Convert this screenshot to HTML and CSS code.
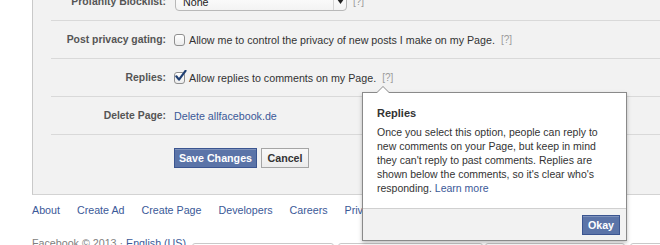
FILE: index.html
```html
<!DOCTYPE html>
<html>
<head>
<meta charset="utf-8">
<link rel="stylesheet" href="styles.css">
</head>
<body>
<div class="page">
  <div class="panel">
    <div class="row">
      <div class="label">Profanity Blocklist:</div>
      <div class="value">
        <div class="select"><span class="select-text">None</span><span class="select-arrow"><svg width="7" height="5" viewBox="0 0 7 5"><path d="M0 0h7L3.5 5z" fill="#222"/></svg></span></div>
        <span class="help">[?]</span>
      </div>
    </div>
    <div class="row">
      <div class="label">Post privacy gating:</div>
      <div class="value">
        <span class="checkbox"></span>
        <span class="text">Allow me to control the privacy of new posts I make on my Page.</span>
        <span class="help">[?]</span>
      </div>
    </div>
    <div class="row">
      <div class="label">Replies:</div>
      <div class="value">
        <span class="checkbox checked"><svg width="13" height="13" viewBox="0 0 13 13"><path d="M2.3 6.3 L5 9.6 L11.5 0.8" fill="none" stroke="#1f3f73" stroke-width="2.2" stroke-linecap="round" stroke-linejoin="round"/></svg></span>
        <span class="text">Allow replies to comments on my Page.</span>
        <span class="help">[?]</span>
      </div>
    </div>
    <div class="row">
      <div class="label">Delete Page:</div>
      <div class="value">
        <a class="link">Delete allfacebook.de</a>
      </div>
    </div>
    <div class="actions">
      <button class="btn btn-primary btn-save">Save Changes</button>
      <button class="btn btn-default">Cancel</button>
    </div>
  </div>
  <div class="footer-links">
    <a class="link">About</a>
    <a class="link">Create Ad</a>
    <a class="link">Create Page</a>
    <a class="link">Developers</a>
    <a class="link">Careers</a>
    <a class="link">Privacy</a>
    <a class="link">Cookies</a>
    <a class="link">Terms</a>
  </div>
  <div class="copyright">Facebook © 2013 · <a class="link">English (US)</a></div>
</div>

<div class="dock">
  <div class="dock-tab tab1"></div>
  <div class="dock-tab tab2"></div>
  <div class="dock-tab tab3"></div>
  <div class="dock-tab tab4"></div>
</div>

<div class="popup">
  <div class="popup-arrow"></div>
  <div class="popup-body">
    <div class="popup-title">Replies</div>
    <div class="popup-text">Once you select this option, people can reply to new comments on your Page, but keep in mind they can't reply to past comments. Replies are shown below the comments, so it's clear who's responding. <a class="link">Learn more</a></div>
  </div>
  <div class="popup-footer">
    <button class="btn btn-primary btn-okay">Okay</button>
  </div>
</div>
</body>
</html>
```

FILE: styles.css
```css
html, body {
  margin: 0;
  padding: 0;
}
body {
  width: 660px;
  height: 245px;
  overflow: hidden;
  background: #fff;
  font-family: "Liberation Sans", Arial, sans-serif;
  font-size: 10.7px;
  line-height: 14px;
  color: #333;
  position: relative;
}
.page {
  padding-left: 32px;
}
.panel {
  width: 700px;
  margin-top: -17px;
  background: #f2f2f2;
  border-left: 1px solid #c9c9c9;
  border-bottom: 1px solid #d3d3d3;
  padding-left: 18px;
}
.row {
  display: flex;
  align-items: center;
  height: 37px;
  border-bottom: 1px solid #d9d9d9;
}
.label {
  width: 115px;
  text-align: right;
  font-weight: bold;
  font-size: 10.4px;
  color: #555;
  white-space: nowrap;
}
.value {
  margin-left: 8px;
  display: flex;
  align-items: center;
  white-space: nowrap;
}
.select {
  width: 172px;
  height: 19px;
  box-sizing: border-box;
  border: 1px solid #b8b8b8;
  border-radius: 4px;
  background: linear-gradient(#fff, #f3f3f3);
  display: flex;
  align-items: center;
  margin-left: 1px;
}
.select-text {
  flex: 1;
  padding-left: 7px;
  color: #222;
}
.select-arrow {
  width: 12px;
  height: 100%;
  border-left: 1px solid #d5d5d5;
  display: flex;
  align-items: center;
  justify-content: center;
}
.help {
  color: #9a9a9a;
  margin-left: 6px;
  font-size: 10px;
}
.checkbox {
  width: 9px;
  height: 10px;
  border: 1px solid #8f8f8f;
  border-radius: 3px;
  background: linear-gradient(#fff, #ececec);
  margin-right: 4px;
  position: relative;
  flex: none;
}
.checkbox svg {
  position: absolute;
  left: -1px;
  top: -3px;
}
.text {
  color: #333;
}
.link {
  color: #3b5998;
  text-decoration: none;
}
.actions {
  padding: 13px 0 26px 123px;
  display: flex;
  gap: 4px;
}
.btn {
  font-family: "Liberation Sans", Arial, sans-serif;
  font-size: 10.7px;
  font-weight: bold;
  height: 20px;
  line-height: 16px;
  padding: 0;
  box-sizing: border-box;
  margin: 0;
  white-space: nowrap;
  cursor: pointer;
}
.btn-primary {
  background: #5b74a8;
  border: 1px solid #3b5590;
  color: #fff;
  box-shadow: inset 0 1px 0 #7f93bc;
}
.btn-save {
  width: 83px;
}
.btn-default {
  background: linear-gradient(#f8f8f8, #ececec);
  border: 1px solid #a5a5a5;
  color: #333;
  width: 48px;
}
.footer-links {
  display: flex;
  gap: 17px;
  margin-top: 8px;
  height: 14px;
}
.copyright {
  margin-top: 19px;
  color: #808080;
}
.dock {
  position: absolute;
  left: 0;
  right: 0;
  top: 243px;
  height: 10px;
}
.dock-tab {
  position: absolute;
  top: 0;
  height: 10px;
  border: 1px solid #c9c9c9;
  border-radius: 3px 3px 0 0;
  background: #fff;
}
.tab1 { left: 192px; width: 140px; }
.tab2 { left: 338px; width: 143px; }
.tab3 { left: 485px; width: 138px; }
.tab4 { left: 630px; width: 60px; }
.popup {
  position: absolute;
  left: 362px;
  top: 92px;
  width: 263px;
  border: 1px solid #8a8a8a;
  background: #fff;
  box-shadow: 0 2px 4px rgba(0,0,0,0.25);
}
.popup-arrow {
  position: absolute;
  left: 13px;
  top: -7px;
  width: 0;
  height: 0;
  border-left: 7px solid transparent;
  border-right: 7px solid transparent;
  border-bottom: 7px solid #8a8a8a;
}
.popup-arrow::after {
  content: "";
  position: absolute;
  left: -6px;
  top: 1px;
  border-left: 6px solid transparent;
  border-right: 6px solid transparent;
  border-bottom: 6px solid #fff;
}
.popup-body {
  padding: 13px 14px 13px 14px;
}
.popup-title {
  font-weight: bold;
  font-size: 11px;
  color: #333;
  margin-bottom: 5px;
}
.popup-text {
  color: #333;
  font-size: 10.5px;
  line-height: 14px;
}
.popup-footer {
  background: #f2f2f2;
  border-top: 1px solid #d0d0d0;
  padding: 6px 6px 5px 6px;
  display: flex;
  justify-content: flex-end;
}
.btn-okay {
  width: 38px;
}
```
